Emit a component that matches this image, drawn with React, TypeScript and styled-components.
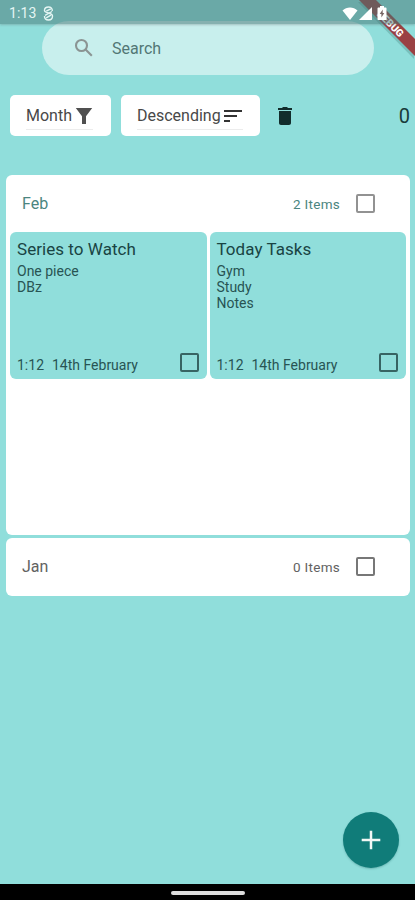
import React from "react";
import styled, { createGlobalStyle } from "styled-components";

const GlobalStyle = createGlobalStyle`
  *, *::before, *::after { box-sizing: border-box; }
  body { margin: 0; background: #90dedb; font-family: Roboto, sans-serif; }
`;

const Screen = styled.div`
  position: relative;
  display: flex;
  flex-direction: column;
  width: 415px;
  height: 900px;
  overflow: hidden;
  background: #90dedb;
`;

const StatusBar = styled.header`
  position: relative;
  z-index: 2;
  display: flex;
  flex: none;
  align-items: center;
  height: 24px;
  padding: 2px 28px 0 9px;
  background: rgba(68, 116, 115, 0.5);
  box-shadow: 0 1px 2px rgba(90, 110, 110, 0.35);
  color: #e4f5f3;
`;

const Clock = styled.span`
  font-size: 14px;
  line-height: 22px;
  letter-spacing: 0.1px;
`;

const StatusGlyph = styled.svg<{ $gap: number }>`
  display: block;
  flex: none;
  margin-left: ${(p) => p.$gap}px;
`;

const Spacer = styled.div`
  flex: 1;
`;

const DebugBanner = styled.svg`
  position: absolute;
  top: 0;
  right: 0;
  z-index: 1;
`;

const SearchBar = styled.div`
  display: flex;
  flex: none;
  align-items: center;
  height: 54px;
  margin: -3px 41px 0 42px;
  padding: 0 32px;
  border-radius: 27px;
  background: #c8efed;
`;

const SearchLabel = styled.span`
  margin-left: 18px;
  color: #527775;
  font-size: 16px;
`;

const Toolbar = styled.div`
  display: flex;
  flex: none;
  align-items: center;
  height: 41px;
  margin: 20px 5px 0 10px;
`;

const FilterButton = styled.button<{ $width: number }>`
  display: flex;
  width: ${(p) => p.$width}px;
  height: 41px;
  margin: 0 10px 0 0;
  padding: 5px 14px 0 16px;
  border: 0;
  border-radius: 5px;
  background: #fff;
  color: #484848;
  font: 400 16px/30px Roboto, sans-serif;
`;

const FilterContent = styled.span`
  display: flex;
  align-items: center;
  height: 30px;
  padding-top: 2px;
  border-bottom: 1px solid #ececec;
  white-space: nowrap;
`;

const FilterText = styled.span<{ $width: number }>`
  width: ${(p) => p.$width}px;
  text-align: left;
`;

const Icon = styled.svg`
  display: block;
  flex: none;
`;

const SelectedCount = styled.span`
  color: #183b3a;
  font-size: 20px;
  line-height: 40px;
`;

const Months = styled.main`
  display: flex;
  flex-direction: column;
  gap: 3px;
  margin: 39px 5px 0 6px;
`;

const MonthPanel = styled.section<{ $height: number }>`
  height: ${(p) => p.$height}px;
  border-radius: 6px;
  background: #fff;
`;

const MonthHeader = styled.div<{ $active?: boolean }>`
  display: flex;
  align-items: center;
  height: 57px;
  padding: 0 35px 0 16px;
  color: ${(p) => (p.$active ? "#4b8580" : "#626262")};
`;

const MonthName = styled.h2`
  flex: 1;
  margin: 0;
  font-size: 16px;
  font-weight: 400;
`;

const ItemCount = styled.span`
  width: 63px;
  font-size: 13.5px;
  letter-spacing: 0.3px;
`;

const CheckBox = styled.span<{ $color: string }>`
  display: block;
  flex: none;
  width: 19px;
  height: 19px;
  border: 2px solid ${(p) => p.$color};
  border-radius: 2px;
`;

const Notes = styled.div`
  display: grid;
  grid-template-columns: 196.5px 196.5px;
  gap: 3px;
  padding-left: 4px;
`;

const NoteCard = styled.article`
  display: flex;
  flex-direction: column;
  height: 147px;
  padding: 7px 8px 4px 7px;
  border-radius: 6px;
  background: #90dedb;
  color: #285453;
`;

const NoteTitle = styled.h3`
  margin: 0 0 3px;
  color: #194443;
  font-size: 17px;
  font-weight: 400;
  line-height: 21px;
  letter-spacing: 0.05px;
`;

const NoteLine = styled.div`
  font-size: 14px;
  line-height: 16px;
`;

const NoteFooter = styled.footer`
  display: flex;
  align-items: center;
  margin-top: auto;
  font-size: 14px;
  line-height: 19px;
`;

const NoteTime = styled.time`
  width: 35px;
  padding-top: 6px;
`;

const NoteDate = styled.span`
  flex: 1;
  padding-top: 6px;
`;

const AddButton = styled.button`
  position: absolute;
  right: 16px;
  bottom: 32px;
  display: grid;
  place-items: center;
  width: 56px;
  height: 56px;
  padding: 0;
  border: 0;
  border-radius: 50%;
  background: #107c79;
  box-shadow: 0 1px 2px rgba(16, 90, 88, 0.3);
`;

const NavigationBar = styled.nav`
  display: flex;
  justify-content: center;
  height: 16px;
  margin-top: auto;
  padding-top: 7px;
  background: #000;
`;

const HomeHandle = styled.span`
  width: 74px;
  height: 4px;
  border-radius: 2px;
  background: #dedede;
`;

interface Note {
  title: string;
  lines: string[];
}

const notes: Note[] = [
  { title: "Series to Watch", lines: ["One piece", "DBz"] },
  { title: "Today Tasks", lines: ["Gym", "Study", "Notes"] },
];

export default function App() {
  return (
    <>
      <GlobalStyle />
      <Screen>
        <StatusBar>
          <Clock>1:13</Clock>
          <StatusGlyph $gap={7} width="11" height="15" viewBox="0 0 11 15" fill="none" stroke="currentColor" strokeWidth="1.4">
            <path d="M9.300 5C9.400 2.200 7.800 1 5.500 1S1.500 2.300 1.500 4.500C1.500 7.500 9.500 6.500 9.500 10S7.800 14 5.500 14 1.500 12.500 1.500 10" />
            <path d="M3.300 5.200 7.800 2.900M2 9.300l7-3.800M3.200 11.800l4.700-2.600" />
          </StatusGlyph>
          <Spacer />
          <StatusGlyph $gap={0} width="16" height="13" viewBox="0 0 16 13" fill="#fff">
            <path d="M8 13 .5 3.5C4.6-.6 11.4-.6 15.5 3.5Z" />
          </StatusGlyph>
          <StatusGlyph $gap={1} width="13" height="13" viewBox="0 0 13 13" fill="#fff">
            <path d="M13 0v13H0Z" />
          </StatusGlyph>
          <StatusGlyph $gap={5} width="10" height="14" viewBox="0 0 10 14">
            <path fill="#fff" d="M3 0h4v1.5h1.5c.6 0 1 .4 1 1V13c0 .6-.4 1-1 1h-7c-.6 0-1-.4-1-1V2.500c0-.6.400-1 1-1H3Z" />
            <path fill="#786765" d="M5.700 3.500 2.700 8h1.700v3.500L7.300 7H5.700Z" />
          </StatusGlyph>
        </StatusBar>
        <DebugBanner width="60" height="62" viewBox="0 0 60 62">
          <path d="M4 0h17l39 39v18Z" fill="#417a78" opacity=".3" transform="translate(-1 2)" />
          <path d="M4 0h17l39 39v17Z" fill="#9a4143" />
          <text x="35.500" y="23.500" transform="rotate(45 35.500 23.500)" dy="3.800" textAnchor="middle" fill="#fff" fontFamily="Roboto" fontSize="10.200" fontWeight="900">DEBUG</text>
        </DebugBanner>
        <SearchBar>
          <Icon width="20" height="20" viewBox="0 0 20 20" fill="none" stroke="#8b9493" strokeWidth="2.100">
            <circle cx="7.500" cy="7.500" r="5.500" />
            <path d="m11.600 11.600 6.200 6.200" />
          </Icon>
          <SearchLabel>Search</SearchLabel>
        </SearchBar>
        <Toolbar>
          <FilterButton $width={101}>
            <FilterContent>
              <FilterText $width={49}>Month</FilterText>
              <Icon width="18" height="18" viewBox="0 0 18 18" fill="#505050">
                <path d="M.8 1h16.400L11 9.200V17H7V9.200Z" />
              </Icon>
            </FilterContent>
          </FilterButton>
          <FilterButton $width={139}>
            <FilterContent>
              <FilterText $width={87}>Descending</FilterText>
              <Icon width="19" height="14" viewBox="0 0 19 14" fill="#333">
                <path d="M0 1h18v2H0ZM0 6h13v2H0ZM0 11h6v2H0Z" />
              </Icon>
            </FilterContent>
          </FilterButton>
          <Icon width="30" height="22" viewBox="0 0 30 22" fill="#122d2c">
            <path d="M8 3h4l1-1h4l1 1h4v2H8ZM9 6h12v12c0 1.200-.8 2-2 2h-8c-1.200 0-2-.8-2-2Z" />
          </Icon>
          <Spacer />
          <SelectedCount>0</SelectedCount>
        </Toolbar>
        <Months>
          <MonthPanel $height={360}>
            <MonthHeader $active>
              <MonthName>Feb</MonthName>
              <ItemCount>2 Items</ItemCount>
              <CheckBox $color="#929292" />
            </MonthHeader>
            <Notes>
              {notes.map((note) => (
                <NoteCard key={note.title}>
                  <NoteTitle>{note.title}</NoteTitle>
                  {note.lines.map((line) => <NoteLine key={line}>{line}</NoteLine>)}
                  <NoteFooter>
                    <NoteTime>1:12</NoteTime>
                    <NoteDate>14th February</NoteDate>
                    <CheckBox $color="#376463" />
                  </NoteFooter>
                </NoteCard>
              ))}
            </Notes>
          </MonthPanel>
          <MonthPanel $height={58}>
            <MonthHeader>
              <MonthName>Jan</MonthName>
              <ItemCount>0 Items</ItemCount>
              <CheckBox $color="#777" />
            </MonthHeader>
          </MonthPanel>
        </Months>
        <NavigationBar><HomeHandle /></NavigationBar>
        <AddButton aria-label="Add note">
          <Icon width="20" height="20" viewBox="0 0 20 20" stroke="#f1f8f5" strokeWidth="2.500">
            <path d="M10 .7v18.600M.7 10h18.600" />
          </Icon>
        </AddButton>
      </Screen>
    </>
  );
}
